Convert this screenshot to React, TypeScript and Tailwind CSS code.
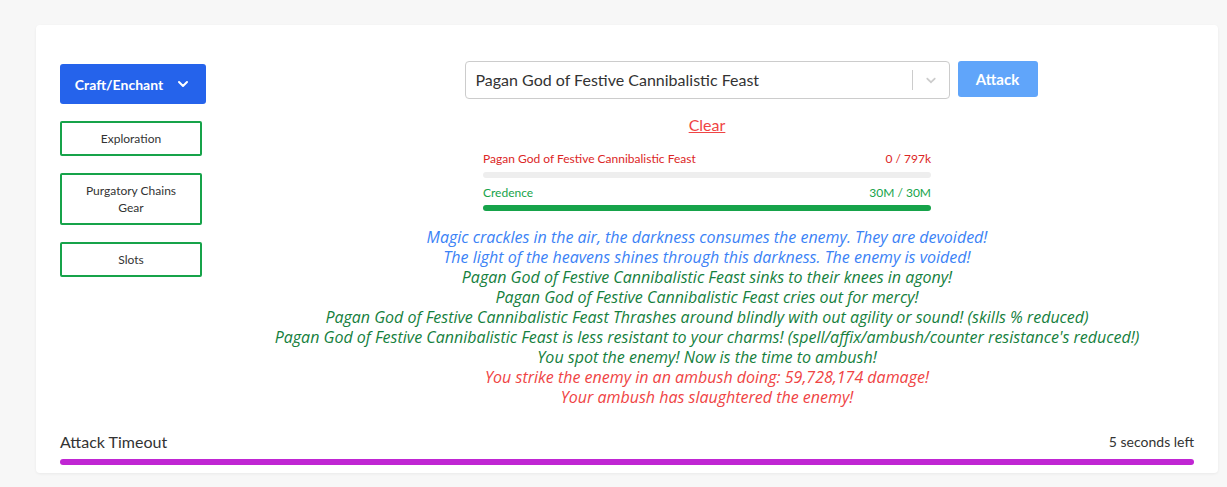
import React from "react";

const messages = [
  { text: "Magic crackles in the air, the darkness consumes the enemy. They are devoided!", color: "text-[#3b82f6]" },
  { text: "The light of the heavens shines through this darkness. The enemy is voided!", color: "text-[#3b82f6]" },
  { text: "Pagan God of Festive Cannibalistic Feast sinks to their knees in agony!", color: "text-[#15803d]" },
  { text: "Pagan God of Festive Cannibalistic Feast cries out for mercy!", color: "text-[#15803d]" },
  {
    text: "Pagan God of Festive Cannibalistic Feast Thrashes around blindly with out agility or sound! (skills % reduced)",
    color: "text-[#15803d]",
  },
  {
    text: "Pagan God of Festive Cannibalistic Feast is less resistant to your charms! (spell/affix/ambush/counter resistance's reduced!)",
    color: "text-[#15803d]",
  },
  { text: "You spot the enemy! Now is the time to ambush!", color: "text-[#15803d]" },
  { text: "You strike the enemy in an ambush doing: 59,728,174 damage!", color: "text-[#ef4444]" },
  { text: "Your ambush has slaughtered the enemy!", color: "text-[#ef4444]" },
];

const sideButtons = ["Exploration", "Purgatory Chains Gear", "Slots"];

const App = () => {
  return (
    <div
      className="min-h-[487px] bg-[#f7f7f7] pt-[25px] pl-[36px] pr-[9px]"
      style={{ fontFamily: "Lato, 'Noto Sans', sans-serif" }}
    >
      <div className="bg-white rounded-sm shadow-[0_1px_3px_rgba(0,0,0,0.06)] px-6 pt-[36px] pb-[8px]">
        <div className="flex">
          {/* side menu */}
          <div className="w-[146px] mt-[3px] flex flex-col gap-[17px]">
            <button className="h-[40px] w-[146px] rounded-[3px] bg-[#2563eb] text-white text-[14px] font-bold flex items-center justify-center gap-3">
              Craft/Enchant
              <svg width="16" height="16" viewBox="0 0 24 24" fill="none" stroke="currentColor" strokeWidth="3" strokeLinecap="round" strokeLinejoin="round">
                <path d="M6 9l6 6 6-6" />
              </svg>
            </button>
            {sideButtons.map((label) => (
              <button
                key={label}
                className="w-[142px] min-h-[35px] py-[7px] px-4 border-2 border-[#16a34a] rounded-[2px] text-[12px] leading-[17px] text-[#333]"
              >
                {label}
              </button>
            ))}
          </div>

          {/* fight area */}
          <div className="flex-1 ml-[14px]">
            <div className="grid grid-cols-[1fr_485px_1fr] items-start">
              <div />
              <div className="h-[38px] border border-[#cccccc] rounded-[4px] flex items-center pl-[10px]">
                <span className="flex-1 text-[16px] text-[#333]">Pagan God of Festive Cannibalistic Feast</span>
                <span className="w-px h-[20px] bg-[#cccccc]" />
                <span className="w-[36px] flex justify-center text-[#cccccc]">
                  <svg width="16" height="16" viewBox="0 0 20 20" fill="currentColor">
                    <path d="M4.516 7.548c0.436-0.446 1.043-0.481 1.576 0l3.908 3.747 3.908-3.747c0.533-0.481 1.141-0.446 1.574 0 0.436 0.445 0.408 1.197 0 1.615-0.406 0.418-4.695 4.502-4.695 4.502-0.217 0.223-0.502 0.335-0.787 0.335s-0.57-0.112-0.789-0.335c0 0-4.287-4.084-4.695-4.502s-0.436-1.17 0-1.615z" />
                  </svg>
                </span>
              </div>
              <div>
                <button className="ml-[8px] h-[36px] w-[80px] rounded-[3px] bg-[#60a5fa] text-white text-[15px] font-bold">
                  Attack
                </button>
              </div>
            </div>

            <div className="mt-[15px] text-center leading-[22px]">
              <span className="text-[16px] text-[#ef4444] underline">Clear</span>
            </div>

            <div className="w-[448px] mx-auto mt-[15px]">
              <div className="flex justify-between text-[12px] leading-[16px] text-[#dc2626]">
                <span>Pagan God of Festive Cannibalistic Feast</span>
                <span>0 / 797k</span>
              </div>
              <div className="h-[6px] mt-[5px] rounded-full bg-[#eeeeee]" />
              <div className="flex justify-between text-[12px] leading-[16px] text-[#16a34a] mt-[7px]">
                <span>Credence</span>
                <span>30M / 30M</span>
              </div>
              <div className="h-[6px] mt-[4px] rounded-full bg-[#16a34a]" />
            </div>

            <div
              className="mt-[16px] text-center italic text-[16px] leading-[20px]"
              style={{ fontFamily: "'Open Sans', 'Noto Sans', sans-serif" }}
            >
              {messages.map((m, i) => (
                <p key={i} className={m.color}>
                  {m.text}
                </p>
              ))}
            </div>
          </div>
        </div>

        <div className="mt-[25px] flex justify-between items-end text-[#333]">
          <span className="text-[16px] leading-[20px]">Attack Timeout</span>
          <span className="text-[14px] leading-[20px]">5 seconds left</span>
        </div>
        <div className="h-[6px] mt-[7px] rounded-full bg-[#c026d3]" />
      </div>
    </div>
  );
};

export default App;
